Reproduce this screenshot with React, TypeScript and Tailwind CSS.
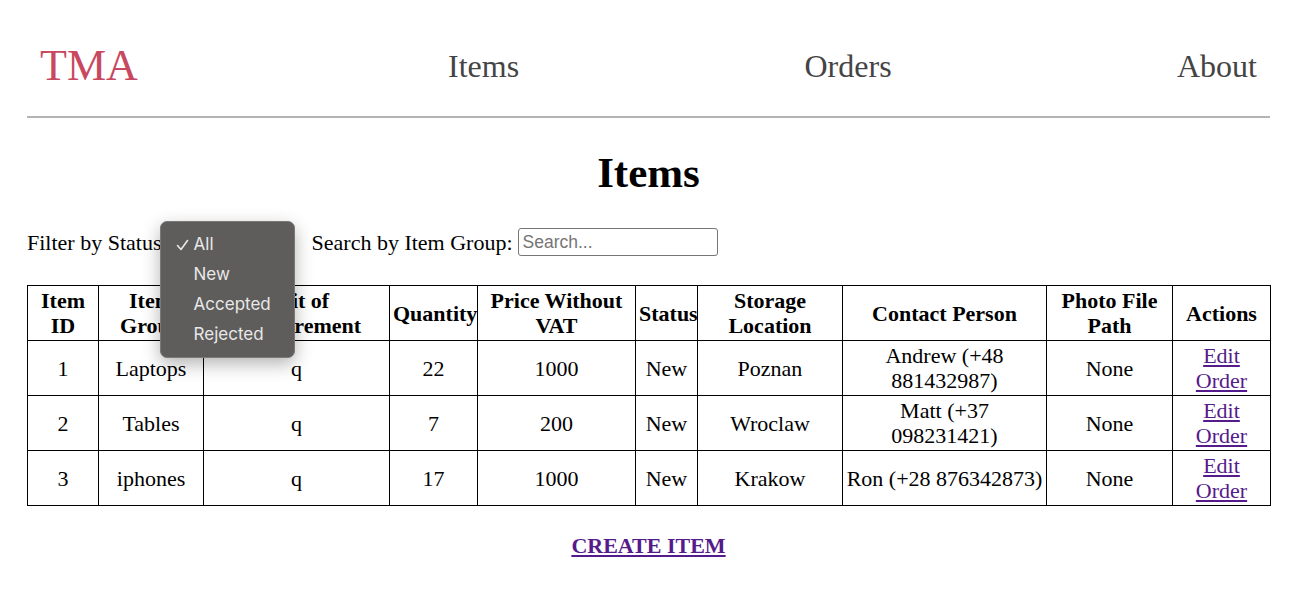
import React from 'react';

const items = [
  { id: 1, group: 'Laptops', unit: 'q', quantity: 22, price: 1000, status: 'New', location: 'Poznan', contact: 'Andrew (+48 881432987)', photo: 'None' },
  { id: 2, group: 'Tables', unit: 'q', quantity: 7, price: 200, status: 'New', location: 'Wroclaw', contact: 'Matt (+37 098231421)', photo: 'None' },
  { id: 3, group: 'iphones', unit: 'q', quantity: 17, price: 1000, status: 'New', location: 'Krakow', contact: 'Ron (+28 876342873)', photo: 'None' },
];

const headers = [
  'Item ID',
  'Item Group',
  'Unit of Measurement',
  'Quantity',
  'Price Without VAT',
  'Status',
  'Storage Location',
  'Contact Person',
  'Photo File Path',
  'Actions',
];

const colWidths = ['w-[71px]', 'w-[105px]', 'w-[186px]', 'w-[88px]', 'w-[158px]', 'w-[62px]', 'w-[145px]', 'w-[204px]', 'w-[126px]', 'w-[98px]'];

const StatusMenu: React.FC = () => {
  const options = ['All', 'New', 'Accepted', 'Rejected'];
  return (
    <div className="absolute left-[-10px] top-[-9px] z-10 w-[135px] rounded-[7px] border border-[#7a7977] bg-[#5e5d5b] py-[7px] pb-[8px] shadow-[0_6px_18px_rgba(0,0,0,0.3)] font-['Inter',sans-serif] text-[17px] text-[#e8e8e8]">
      {options.map((opt, i) => (
        <div key={opt} className="relative flex h-[30px] items-center pl-[33px] leading-none">
          {i === 0 && (
            <svg className="absolute left-[15px] top-[10px]" width="13" height="12" viewBox="0 0 13 12" fill="none">
              <polyline points="1.5,6.5 5,10.5 11.5,1.5" stroke="#e8e8e8" strokeWidth="1.6" strokeLinecap="round" strokeLinejoin="round" />
            </svg>
          )}
          {opt}
        </div>
      ))}
    </div>
  );
};

const App: React.FC = () => {
  return (
    <div className="min-h-[604px] bg-white pl-[27px] pr-[24px] pt-[41px] font-['Liberation_Serif',serif] text-black">
      {/* Header */}
      <nav className="flex h-[50px] items-center px-[13px]">
        <span className="text-[44px] leading-none text-[#c8485f]">TMA</span>
        <div className="ml-auto flex w-[809px] justify-between text-[32px] leading-none text-[#444444]">
          <a href="#items">Items</a>
          <a href="#orders">Orders</a>
          <a href="#about">About</a>
        </div>
      </nav>
      <div className="mt-[25px] h-[2px] bg-[#b4b4b4]"></div>

      <h1 className="mt-[30px] text-center text-[43px] font-bold leading-[49px]">Items</h1>

      {/* Filters */}
      <div className="mt-[31px] flex h-[28px] items-center text-[22px] leading-[25px]">
        <span>Filter by Status:</span>
        <div className="relative ml-[2px] h-[24px] w-[132px]">
          <div className="h-full w-[122px] rounded-[4px] border border-[#767676] bg-white"></div>
          <StatusMenu />
        </div>
        <span className="ml-[10px]">Search by Item Group:</span>
        <input
          type="text"
          placeholder="Search..."
          className="ml-[5px] h-[28px] w-[200px] rounded-[3px] border border-[#767676] px-[4px] font-['Liberation_Sans',sans-serif] text-[17.5px] placeholder:text-[#757575] outline-none"
        />
      </div>

      {/* Table */}
      <table className="mt-[29px] w-[1243px] table-fixed border-collapse text-[22px] leading-[25px]">
        <colgroup>
          {colWidths.map((w, i) => (
            <col key={i} className={w} />
          ))}
        </colgroup>
        <thead>
          <tr>
            {headers.map((h) => (
              <th key={h} className="border border-black px-[3px] py-[2px] text-center align-middle font-bold">
                {h}
              </th>
            ))}
          </tr>
        </thead>
        <tbody>
          {items.map((item) => (
            <tr key={item.id}>
              <td className="border border-black px-[3px] py-[2px] text-center">{item.id}</td>
              <td className="border border-black px-[3px] py-[2px] text-center">{item.group}</td>
              <td className="border border-black px-[3px] py-[2px] text-center">{item.unit}</td>
              <td className="border border-black px-[3px] py-[2px] text-center">{item.quantity}</td>
              <td className="border border-black px-[3px] py-[2px] text-center">{item.price}</td>
              <td className="border border-black px-[3px] py-[2px] text-center">{item.status}</td>
              <td className="border border-black px-[3px] py-[2px] text-center">{item.location}</td>
              <td className="border border-black px-[3px] py-[2px] text-center">{item.contact}</td>
              <td className="border border-black px-[3px] py-[2px] text-center">{item.photo}</td>
              <td className="border border-black px-[3px] py-[2px] text-center">
                <a href="#edit" className="text-[#551a8b] underline">
                  Edit Order
                </a>
              </td>
            </tr>
          ))}
        </tbody>
      </table>

      <div className="mt-[27px] text-center text-[22px] leading-[25px]">
        <a href="#create" className="font-bold text-[#551a8b] underline">
          CREATE ITEM
        </a>
      </div>
    </div>
  );
};

export default App;
